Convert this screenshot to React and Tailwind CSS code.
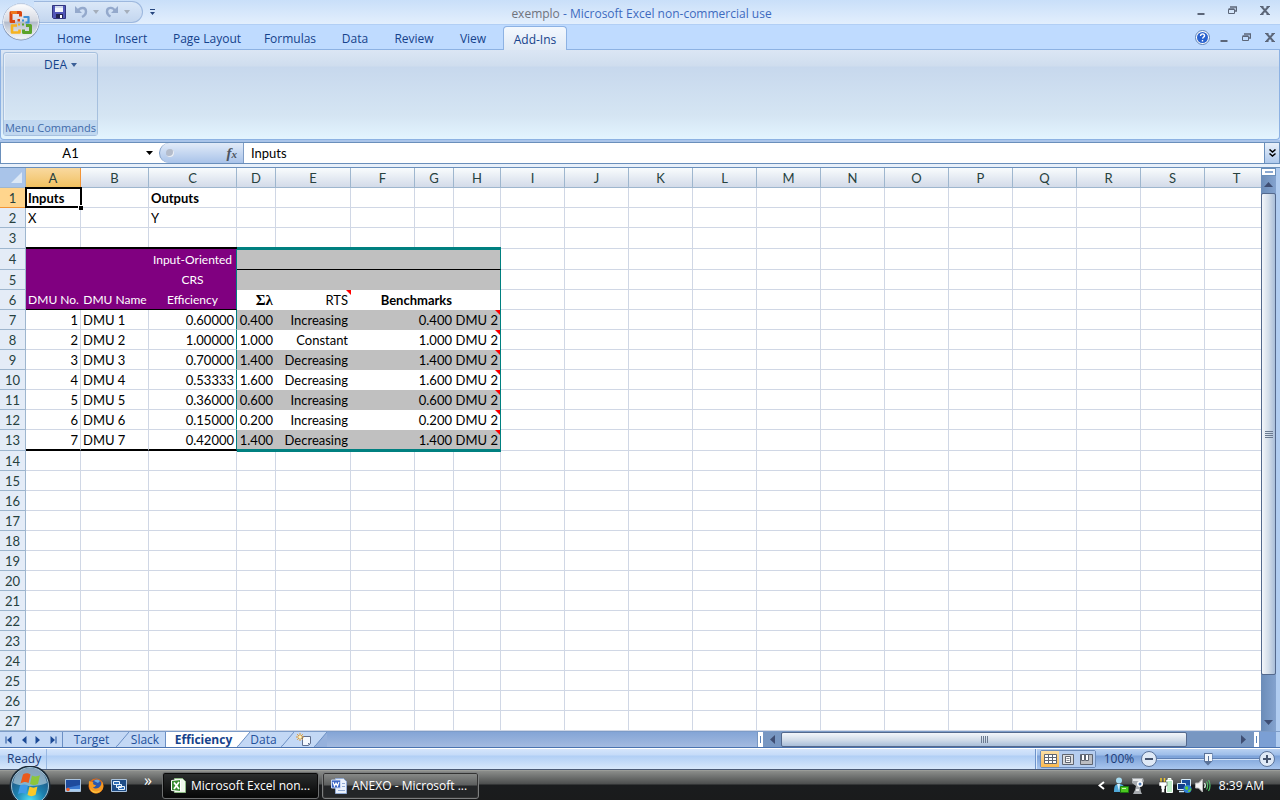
import React, { useState } from "react";

const MENU_TABS = [
  { label: "Home", width: "w-[58px]" },
  { label: "Insert", width: "w-[56px]" },
  { label: "Page Layout", width: "w-[96px]" },
  { label: "Formulas", width: "w-[70px]" },
  { label: "Data", width: "w-[60px]" },
  { label: "Review", width: "w-[58px]" },
  { label: "View", width: "w-[60px]" },
  { label: "Add-Ins", width: "w-[64px]" },
];

const COLUMNS = "ABCDEFGHIJKLMNOPQRST".split("");
const COLUMN_WIDTHS = [
  "w-[55px]", "w-[68px]", "w-[88px]", "w-[39px]", "w-[75px]",
  "w-[64px]", "w-[39px]", "w-[47px]",
];

// Efficiency results, one entry per DMU (sheet rows 7 to 13)
const RESULTS = [
  { dmu: 1, efficiency: "0.60000", lambda: "0.400", rts: "Increasing" },
  { dmu: 2, efficiency: "1.00000", lambda: "1.000", rts: "Constant" },
  { dmu: 3, efficiency: "0.70000", lambda: "1.400", rts: "Decreasing" },
  { dmu: 4, efficiency: "0.53333", lambda: "1.600", rts: "Decreasing" },
  { dmu: 5, efficiency: "0.36000", lambda: "0.600", rts: "Increasing" },
  { dmu: 6, efficiency: "0.15000", lambda: "0.200", rts: "Increasing" },
  { dmu: 7, efficiency: "0.42000", lambda: "1.400", rts: "Decreasing" },
];

/* ---------- window icons ---------- */

const OfficeLogo = () => (
  <svg width="40" height="40" viewBox="0 0 40 40">
    <defs>
      <linearGradient id="orb" x1="0" y1="0" x2="0" y2="1">
        <stop offset="0" stopColor="#fdfdfe" />
        <stop offset="0.48" stopColor="#d5d9e2" />
        <stop offset="0.52" stopColor="#b4bccb" />
        <stop offset="1" stopColor="#f6f8fb" />
      </linearGradient>
    </defs>
    <circle cx="20" cy="20" r="18.5" fill="#8394b2" />
    <circle cx="20" cy="19.6" r="17.5" fill="url(#orb)" stroke="#eef2f8" />
    <g fill="none" strokeWidth="3" strokeLinejoin="round">
      <path d="M14 19.5h-4v-9h9.500v4" stroke="#d8460f" />
      <path d="M10 10.500h6" stroke="#ef7a1c" />
      <path d="M22.500 15h5v5.500h-3" stroke="#3c8fd6" strokeWidth="2.200" />
      <path d="M16 23.500h-5v7h7.500v-3" stroke="#f6b320" strokeWidth="2.600" />
      <path d="M25 23.500h4.500v7h-7v-3" stroke="#5ba32b" />
    </g>
    <path d="M16.500 17h2.500v2.500h-2.500z" fill="#d8460f" />
    <path d="M21 17.500h2v2h-2z" fill="#3c8fd6" />
    <path d="M17 21.500h2v2h-2z" fill="#f6b320" />
    <path d="M21 21.500h2v2h-2z" fill="#5ba32b" />
  </svg>
);

const SaveIcon = () => (
  <svg width="14" height="14" viewBox="0 0 14 14">
    <path d="M0.500 0.500h13v13h-12l-1-1z" fill="#5156b8" stroke="#32357f" />
    <path d="M3 1h8v6H3z" fill="#f2f5fb" />
    <path d="M3 1h8v2H3z" fill="#cfd8ee" />
    <path d="M4 9h7v4H4z" fill="#22244f" />
    <path d="M8 10h2v3H8z" fill="#fff" />
  </svg>
);

const UndoIcon = () => (
  <svg width="14" height="14" viewBox="0 0 14 14" fill="none" stroke="#94a9cc">
    <path d="M4 6c2-4 8-4 8 .5 0 3-2 4.500-4 5.500" strokeWidth="2.400" />
    <path d="M1 1v7h7z" fill="#94a9cc" stroke="none" />
  </svg>
);

const RedoIcon = () => (
  <svg width="14" height="14" viewBox="0 0 14 14" fill="none" stroke="#94a9cc">
    <path d="M10 6C8 1.500 2 2 2 6.500c0 2.500 1.500 4 3.500 5" strokeWidth="2.400" />
    <path d="M13 1v7H6z" fill="#94a9cc" stroke="none" />
  </svg>
);

const Caret = ({ color = "#3b5f97" }) => (
  <svg width="6" height="4" viewBox="0 0 6 4">
    <path d="M0 0h6L3 4z" fill={color} />
  </svg>
);

const MinimizeIcon = () => (
  <svg width="8" height="10" viewBox="0 0 8 10">
    <path d="M0.500 8h7v2h-7z" fill="#5c6678" />
  </svg>
);

const RestoreIcon = () => (
  <svg width="9" height="8" viewBox="0 0 9 8" fill="none" stroke="#5c6678">
    <path d="M2 1h7M8.500 1v4H7" strokeWidth="1.500" />
    <path d="M0.500 3.500h6v4h-6z" />
    <path d="M0.500 3h6" strokeWidth="1.500" />
  </svg>
);

const CloseIcon = () => (
  <svg width="10" height="9" viewBox="0 0 10 9" fill="none" stroke="#5c6678">
    <path d="M1.500 0.500l7 8M8.500 0.500l-7 8" strokeWidth="2" />
    <path d="M0 0.500h3.500M6.500 0.500H10M0 8.500h3.500M6.500 8.500H10" />
  </svg>
);

const HelpIcon = () => (
  <svg width="15" height="15" viewBox="0 0 15 15">
    <circle cx="7.500" cy="7.500" r="7" fill="#fff" stroke="#5b81b8" />
    <circle cx="7.500" cy="7.500" r="5.500" fill="#2a63cf" />
    <path d="M5.500 6c0-3 4.500-2.600 4 0-.2 1-1.700 1.200-1.900 2.600M7.500 10v1.500" stroke="#fff" strokeWidth="1.400" fill="none" />
  </svg>
);

/* ---------- scrollbar and sheet tab pieces ---------- */

const ArrowIcon = ({ dir, color = "#3f4e73" }) => {
  const shapes = {
    up: "M4.500 2L9 7H0z",
    down: "M0 2h9L4.500 7z",
    left: "M7 0v9L2 4.500z",
    right: "M2 0v9l5-4.500z",
  };
  return (
    <svg width="9" height="9" viewBox="0 0 9 9">
      <path d={shapes[dir]} fill={color} />
    </svg>
  );
};

const NavIcon = ({ dir, bar }) => (
  <svg width="8" height="8" viewBox="0 0 8 8" fill="#1c4a96">
    {dir === "left" ? <path d="M6.500 0v8L2 4z" /> : <path d="M1.500 0v8L6 4z" />}
    {bar && (dir === "left" ? <path d="M0.500 0.500h1v7h-1z" /> : <path d="M6.500 0.500h1v7h-1z" />)}
  </svg>
);

// The slanted edge between two sheet tabs
const TabEdge = ({ left = "#c3d8f5", right = "#c3d8f5" }) => (
  <svg width="13" height="15" viewBox="0 0 13 15" className="shrink-0">
    <path d="M0 0h13v15H0z" fill={right} />
    <path d="M0 0h13L2 13q-1 2-2 2z" fill={left} />
    <path d="M13 0L2 13q-1 1.500-2 1.500" fill="none" stroke="#6b8fc4" />
  </svg>
);

const NewSheetIcon = () => (
  <svg width="16" height="14" viewBox="0 0 16 14">
    <path d="M6.500 3.500h8v7l-2 2h-6z" fill="#f4f8fd" stroke="#5f6f8f" />
    <path d="M14 10h-2v2z" fill="#5f6f8f" />
    <path d="M4 0v8M0 4h8M1.200 1.200l5.600 5.600M6.800 1.200L1.200 6.800" stroke="#e29a2e" />
    <circle cx="4" cy="4" r="1.500" fill="#fff3b8" />
  </svg>
);

/* ---------- taskbar icons ---------- */

const StartOrb = () => (
  <svg width="42" height="34" viewBox="0 0 42 34">
    <defs>
      <radialGradient id="start" cx="0.500" cy="0.900" r="0.800">
        <stop offset="0" stopColor="#4fe0f5" />
        <stop offset="0.500" stopColor="#1c7fae" />
        <stop offset="1" stopColor="#24517c" />
      </radialGradient>
    </defs>
    <circle cx="21" cy="20" r="20.500" fill="#1b2a38" />
    <circle cx="21" cy="20" r="18.500" fill="url(#start)" stroke="#9fc4d8" />
    <path d="M4 17C6 5 14 2 21 2s15 3 17 15c-8 4-26 4-34 0z" fill="#d9e8ee" opacity="0.550" />
    <path d="M14 8.500c3-2 5.500-1 7.500 0L19.500 17c-3-1.500-5-1-8 .5z" fill="#ea5a1d" />
    <path d="M23 9.500c3 1.500 5 1.200 8-.5l-2 9c-3 1.500-5 1.500-8 0z" fill="#8cc63c" />
    <path d="M11 19.500c3-1.500 5-1.500 8 0L17 28c-3-1.500-5-1.500-8 0z" fill="#3f9be8" />
    <path d="M20.500 20.500c3 1.500 5 1.500 8 0l-2 8.500c-3 1.500-5 1.500-8 0z" fill="#fbc928" />
  </svg>
);

const DesktopIcon = () => (
  <svg width="16" height="14" viewBox="0 0 16 14">
    <path d="M0.500 0.500h15v12h-15z" fill="#3a78cf" stroke="#a9c2dd" />
    <path d="M1 1h14v5L1 9z" fill="#1e4a9c" />
    <path d="M1 10h14v2H1z" fill="#a8cdf2" />
    <circle cx="3" cy="10.500" r="1.800" fill="#e85b2a" />
  </svg>
);

const FirefoxIcon = () => (
  <svg width="16" height="16" viewBox="0 0 16 16">
    <circle cx="8" cy="8" r="7.500" fill="#e66a14" />
    <circle cx="8.500" cy="6.500" r="5" fill="#2c58ad" />
    <path d="M6 3c2-2 5-1 6 0l-2 2z" fill="#69a8e0" />
    <path d="M1 3c1.500 1 3 .5 4.500 1.500C4 6 6.500 7 8 7c-1 2.500-2.500 2-3 2 1.500 2.500 6 2 8-2 1-2 1-3 .5-4C16 6 16.500 12 11 14.800 5 17 0 12 1 3z" fill="#f59a23" />
    <path d="M2 10c2 4 7 5 11 2-3 4-9 4-11-2z" fill="#fbd24a" />
  </svg>
);

const SwitchWindowsIcon = () => (
  <svg width="16" height="14" viewBox="0 0 16 14">
    <path d="M0.500 0.500h15v12h-15z" fill="#1d4c86" stroke="#a9c2dd" />
    <path d="M2.500 2.500h6v3h-6zM5.500 5.500h5v3h-5zM7.500 7.500h6v3h-6z" fill="#2f6fb8" stroke="#e9f3fb" />
  </svg>
);

const ExcelIcon = () => (
  <svg width="15" height="15" viewBox="0 0 15 15">
    <path d="M3.500 0.500h8l3 3v11h-11z" fill="#eef7ea" stroke="#8dbb84" />
    <path d="M0.500 2.500l9-1v12l-9-1z" fill="#3a8c33" stroke="#fff" />
    <path d="M3 4.500l5 6.500M8 4L3 11" stroke="#fff" strokeWidth="1.800" />
  </svg>
);

const WordIcon = () => (
  <svg width="16" height="16" viewBox="0 0 16 16">
    <path d="M4.500 0.500h8l3 3v12h-11z" fill="#eaf1fb" stroke="#8fa8d3" />
    <path d="M7 12.500h7M11 5.500h3M11 8.500h3" stroke="#8fa8d3" />
    <path d="M0.500 2h9v8h-9z" fill="#3c66c4" stroke="#c9d8f2" />
    <path d="M2 4l1.500 4L5 5l1.500 3L8 4" stroke="#fff" strokeWidth="1.200" fill="none" />
  </svg>
);

const MessengerIcon = () => (
  <svg width="16" height="17" viewBox="0 0 16 17">
    <circle cx="6" cy="3.500" r="3" fill="#a8dcf2" />
    <path d="M1 15c0-6 1-8 5-8s6 2 6 8z" fill="#4fa8d8" />
    <path d="M4 7h3l-1 7z" fill="#d8f1fb" />
    <path d="M7.500 9.500h8v6h-8z" fill="#4cc821" stroke="#1d7a10" />
    <path d="M9 11h4v1H9z" fill="#c9f7a8" />
  </svg>
);

const DeviceIcon = () => (
  <svg width="13" height="16" viewBox="0 0 13 16">
    <path d="M1 0h11l1 3-4 6 1 5 1 2H2l2-4 1-4-4-3z" fill="#a8acb0" />
    <path d="M2 1h9v2H2z" fill="#e7e9ea" />
    <circle cx="9" cy="6" r="3" fill="#fff" />
    <circle cx="9" cy="6" r="1.500" fill="#4a75ad" />
    <path d="M5 11h3v2H5z" fill="#e7e9ea" />
  </svg>
);

const PowerIcon = () => (
  <svg width="15" height="16" viewBox="0 0 15 16">
    <path d="M7.500 2.500h6v12h-6zM9 0.500h3v2H9z" fill="#bfeec8" stroke="#fff" />
    <path d="M2 0v4M5.500 0v4" stroke="#f0c62c" strokeWidth="1.500" />
    <path d="M0 4h8v4H6v3h-.5v3.500h-3V11H2V8H0z" fill="#fff" stroke="#222" strokeWidth="0.500" />
  </svg>
);

const NetworkIcon = () => (
  <svg width="15" height="16" viewBox="0 0 15 16">
    <path d="M4.500 1.500h9v7h-9z" fill="#1a4f9c" stroke="#d6ecfa" />
    <path d="M0.500 5.500h8v6h-8z" fill="#123e88" stroke="#d6ecfa" />
    <path d="M2 13.500h5" stroke="#d6ecfa" strokeWidth="1.500" />
    <circle cx="10.500" cy="11" r="4" fill="#2d7fd6" />
    <path d="M8 9c2-2 4 0 3 2s-3 1-3-2zM11 13l3-3c1 2-1 4-3 4z" fill="#5fd038" />
  </svg>
);

const VolumeIcon = () => (
  <svg width="16" height="15" viewBox="0 0 16 15">
    <path d="M0.500 5h3l4-4v13l-4-4h-3z" fill="#f3f3f3" stroke="#b5b5b5" />
    <path d="M9.500 5c1 1.500 1 3.500 0 5" stroke="#e8f7ea" strokeWidth="1.200" fill="none" />
    <path d="M11.500 3.500c1.500 2 1.500 6 0 8M13.500 2c2 3 2 8 0 11" stroke="#55c06a" strokeWidth="1.200" fill="none" />
  </svg>
);

/* ---------- window chrome ---------- */

const WindowButtons = () => (
  <>
    <button aria-label="Minimize"><MinimizeIcon /></button>
    <button aria-label="Restore"><RestoreIcon /></button>
    <button aria-label="Close"><CloseIcon /></button>
  </>
);

const TitleBar = () => (
  <header className="relative flex h-[25px] items-center border-b border-[#b2cff5] bg-linear-to-b from-[#c9dff9] to-[#e3effd]">
    <button aria-label="Office Button" className="absolute left-px top-[2px] z-10">
      <OfficeLogo />
    </button>
    <div className="ml-[34px] flex h-[22px] w-[109px] items-center rounded-r-full border border-l-0 border-[#9db8de] bg-linear-to-b from-[#dbe8f8] to-[#c3d6ef] pl-[18px]">
      <button aria-label="Save"><SaveIcon /></button>
      <button aria-label="Undo" className="ml-2 flex items-center gap-[5px]">
        <UndoIcon /><Caret color="#a5aebb" />
      </button>
      <button aria-label="Redo" className="ml-[6px] flex items-center gap-[5px]">
        <RedoIcon /><Caret color="#a5aebb" />
      </button>
    </div>
    <button aria-label="Customize Quick Access Toolbar" className="ml-[7px]">
      <svg width="5" height="6" viewBox="0 0 5 6" fill="#26467f">
        <path d="M0 0h5v1H0zM0 3h5L2.500 6z" />
      </svg>
    </button>
    <h1 className="flex-1 pl-1 pt-1 text-center text-xs leading-4 text-[#3e6bbf]">
      <span className="text-[#6f737c]">exemplo</span> - Microsoft Excel non-commercial use
    </h1>
    <div className="flex w-[156px] items-center justify-end gap-[23px] pb-1 pr-[10px]">
      <WindowButtons />
    </div>
  </header>
);

const RibbonTabs = () => {
  const [active, setActive] = useState("Add-Ins");
  return (
    <nav className="flex h-[25px] items-end border-b border-[#8db2e3] bg-[#bfdbff] pl-[45px]">
      {MENU_TABS.map((tab) => (
        <button
          key={tab.label}
          onClick={() => setActive(tab.label)}
          className={`${tab.width} ${
            tab.label === active
              ? "-mb-px h-[24px] rounded-t border border-b-0 border-[#8db2e3] bg-linear-to-b from-[#f3f8fe] to-[#dfe9f5]"
              : "h-[23px]"
          } whitespace-nowrap pt-[2px] text-xs leading-4 text-[#15428b]`}
        >
          {tab.label}
        </button>
      ))}
      <div className="ml-auto flex h-full items-center gap-[14px] pr-[5px]">
        <button aria-label="Help" className="-mr-1"><HelpIcon /></button>
        <WindowButtons />
      </div>
    </nav>
  );
};

const Ribbon = () => (
  <section className="flex h-[90px] px-[2px] pb-[3px] pt-[2px] bg-[linear-gradient(#dbe6f4_0px,#cfddee_16px,#c7d8ed_17px,#d5e5f3_66px,#e3f4fe_88px)] border-x border-b border-[#8db2e3] rounded-b">
    <div className="flex w-[95px] flex-col justify-between rounded-[3px] border border-[#a6c0de] shadow-[inset_1px_1px_0_#e6eef8]">
      <button className="mt-1 flex items-center gap-1 self-start pl-[40px] text-xs leading-4 text-[#15428b]">
        DEA <Caret />
      </button>
      <div className="whitespace-nowrap bg-[#c1d8f0] text-center text-[11px] leading-[15px] text-[#3e6aaa]">
        Menu Commands
      </div>
    </div>
  </section>
);

const FormulaBar = () => (
  <div className="flex h-[22px] border-y border-[#6a8fbb] bg-white font-[Lato,'Open_Sans',sans-serif] text-black">
    <input
      aria-label="Name Box"
      defaultValue="A1"
      className="w-[140px] border-l border-[#6a8fbb] text-center text-[13px] leading-5 outline-none"
    />
    <button aria-label="Open Name Box list" className="flex w-[19px] items-center justify-center">
      <svg width="7" height="4" viewBox="0 0 7 4"><path d="M0 0h7L3.500 4z" /></svg>
    </button>
    <div className="flex w-[85px] items-center justify-between rounded-l-full border-x border-[#7f9dc6] bg-linear-to-b from-[#e2ebf8] to-[#a9c3e9] pl-[6px] pr-[6px]">
      <span className="size-2 rounded-full bg-[#b4bccb] shadow-[inset_-1px_-1px_0_#e9eef6]" />
      <button aria-label="Insert Function" className="font-['Liberation_Serif',serif] text-[15px] font-bold italic leading-4 text-[#4d545f]">
        f<span className="text-[11px]">x</span>
      </button>
    </div>
    <input
      aria-label="Formula"
      defaultValue="Inputs"
      className="min-w-0 flex-1 pl-[7px] text-[13px] leading-5 outline-none"
    />
    <button aria-label="Expand Formula Bar" className="flex w-4 items-center justify-center border-x border-[#6a8fbb] bg-linear-to-b from-[#e8f0fa] to-[#afc9ec]">
      <svg width="7" height="8" viewBox="0 0 7 8" fill="none" stroke="#000" strokeWidth="1.500">
        <path d="M0.500 0.500l3 2.500 3-2.500M0.500 4.500l3 2.500 3-2.500" />
      </svg>
    </button>
  </div>
);

/* ---------- worksheet ---------- */

const GRID = "border-r border-b border-[#d0d7e5]";

// Red corner of a cell that has a note
const NoteMark = () => (
  <span className="absolute right-0 top-0 size-[5px] bg-[#f00] [clip-path:polygon(0_0,100%_0,100%_100%)]" />
);

const EmptyCells = ({ count }) =>
  Array.from({ length: count }, (_, i) => <td key={i} className={GRID}></td>);

const RowHeader = ({ n }) => (
  <th
    scope="row"
    className={`border-b border-r text-center font-normal text-[#27413e] ${
      n === 1 ? "border-[#f29436] bg-[#ffd58d]" : "border-[#9eb6ce] bg-[#e4ecf7]"
    }`}
  >
    {n}
  </th>
);

const ResultRow = ({ row, n }) => {
  const last = n === 13;
  const fill = row.dmu % 2 ? "bg-[#c0c0c0]" : "bg-white";
  const left = last ? "border-r border-r-[#d0d7e5] border-b-2 border-b-black" : GRID;
  const inner = last ? "border-b-2 border-b-[#008080]" : "";
  return (
    <tr className={last ? "h-[21px]" : "h-5"}>
      <RowHeader n={n} />
      <td className={`${left} pr-[2px] text-right`}>{row.dmu}</td>
      <td className={`${left} pl-[2px]`}>DMU {row.dmu}</td>
      <td className={`${last ? "border-b-2 border-b-black" : "border-b border-b-[#d0d7e5]"} border-r border-r-[#008080] pr-[2px] text-right`}>
        {row.efficiency}
      </td>
      <td className={`${fill} ${inner} pr-[3px] text-right`}>{row.lambda}</td>
      <td className={`${fill} ${inner} pr-[3px] text-right`}>{row.rts}</td>
      <td className={`${fill} ${inner}`}></td>
      <td className={`${fill} ${inner} pr-[2px] text-right`}>{row.lambda}</td>
      <td className={`${fill} ${inner} relative border-r border-r-[#008080] pr-[2px] text-right`}>
        DMU 2<NoteMark />
      </td>
      <EmptyCells count={12} />
    </tr>
  );
};

const Worksheet = () => (
  <table className="w-full min-w-[1269px] table-fixed border-separate border-spacing-0 whitespace-nowrap bg-white font-[Lato,'Open_Sans',sans-serif] text-[13px] leading-[18px] text-black">
    <colgroup>
      <col className="w-[26px]" />
      {COLUMNS.slice(0, 19).map((c, i) => (
        <col key={c} className={COLUMN_WIDTHS[i] || "w-[64px]"} />
      ))}
      <col />
    </colgroup>
    <thead>
      <tr className="h-5">
        <td className="border-b border-r border-[#9eb6ce] bg-[#a9c4e9]">
          <div className="ml-auto mr-[3px] size-[11px] bg-[#dce8f6] [clip-path:polygon(100%_0,100%_100%,0_100%)]" />
        </td>
        {COLUMNS.map((c) => (
          <th
            key={c}
            scope="col"
            className={`border-b border-r text-center font-normal text-[#27413e] ${
              c === "A"
                ? "border-[#f29436] bg-linear-to-b from-[#f9d99f] to-[#f1c15f]"
                : "border-[#9eb6ce] bg-linear-to-b from-[#f9fcfd] to-[#d3dbe9]"
            }`}
          >
            {c}
          </th>
        ))}
      </tr>
    </thead>
    <tbody>
      <tr className="h-5">
        <RowHeader n={1} />
        <td className={`${GRID} relative pl-[2px] font-bold`}>
          Inputs
          <span className="absolute -left-px -right-[2px] -top-px -bottom-px border-2 border-black" />
          <span className="absolute -bottom-[3px] -right-[3px] size-[5px] border-l border-t border-white bg-black" />
        </td>
        <td className={GRID}></td>
        <td className={`${GRID} pl-[2px] font-bold`}>Outputs</td>
        <EmptyCells count={17} />
      </tr>
      <tr className="h-5">
        <RowHeader n={2} />
        <td className={`${GRID} pl-[2px]`}>X</td>
        <td className={GRID}></td>
        <td className={`${GRID} pl-[2px]`}>Y</td>
        <EmptyCells count={17} />
      </tr>
      <tr className="h-[21px]">
        <RowHeader n={3} />
        {["A", "B", "C"].map((c) => (
          <td key={c} className="border-b-2 border-b-black bg-[linear-gradient(#d0d7e5,#d0d7e5)] bg-[length:1px_100%] bg-right bg-no-repeat"></td>
        ))}
        {["D", "E", "F", "G", "H"].map((c) => (
          <td key={c} className="border-b-2 border-b-[#008080] bg-[linear-gradient(#d0d7e5,#d0d7e5)] bg-[length:1px_100%] bg-right bg-no-repeat"></td>
        ))}
        <EmptyCells count={12} />
      </tr>
      <tr className="h-[21px]">
        <RowHeader n={4} />
        <td className="bg-[#800080]"></td>
        <td className="bg-[#800080]"></td>
        <td className="border-r border-[#008080] bg-[#800080] text-center text-xs text-white">Input-Oriented</td>
        <td colSpan={5} className="border-b border-r border-t border-b-black border-r-[#008080] border-t-[#008080] bg-[#c0c0c0]"></td>
        <EmptyCells count={12} />
      </tr>
      <tr className="h-5">
        <RowHeader n={5} />
        <td className="bg-[#800080]"></td>
        <td className="bg-[#800080]"></td>
        <td className="border-r border-[#008080] bg-[#800080] text-center text-xs text-white">CRS</td>
        <td colSpan={5} className="border-r border-[#008080] bg-[#c0c0c0]"></td>
        <EmptyCells count={12} />
      </tr>
      <tr className="h-5">
        <RowHeader n={6} />
        <td className="border-b border-black bg-[#800080] text-center text-xs text-white">DMU No.</td>
        <td className="border-b border-black bg-[#800080] text-center text-xs text-white">DMU Name</td>
        <td className="border-b border-r border-b-black border-r-[#008080] bg-[#800080] text-center text-xs text-white">Efficiency</td>
        <td className="pr-[3px] text-right font-['Liberation_Serif',serif] text-[15px] font-bold">Σλ</td>
        <td className="relative pr-[3px] text-right">RTS<NoteMark /></td>
        <td colSpan={2} className="pr-[2px] text-right font-bold">Benchmarks</td>
        <td className="border-r border-[#008080]"></td>
        <EmptyCells count={12} />
      </tr>
      {RESULTS.map((row) => (
        <ResultRow key={row.dmu} row={row} n={row.dmu + 6} />
      ))}
      {Array.from({ length: 14 }, (_, i) => i + 14).map((n) => (
        <tr key={n} className="h-5">
          <RowHeader n={n} />
          <EmptyCells count={3} />
          {n === 14 ? (
            ["D", "E", "F", "G", "H"].map((c) => (
              <td key={c} className="border-b border-t border-b-[#d0d7e5] border-t-[#008080] bg-[linear-gradient(#d0d7e5,#d0d7e5)] bg-[length:1px_100%] bg-right bg-no-repeat"></td>
            ))
          ) : (
            <EmptyCells count={5} />
          )}
          <EmptyCells count={12} />
        </tr>
      ))}
    </tbody>
  </table>
);

const VerticalScrollbar = () => (
  <div className="flex w-[15px] shrink-0 flex-col bg-linear-to-r from-[#6b8cb8] to-[#84a3cf]">
    <div className="flex h-2 items-center justify-center border border-[#6a8fbb] bg-white">
      <span className="h-[2px] w-2 bg-[#8aa8d0]" />
    </div>
    <button aria-label="Scroll up" className="flex h-[17px] items-center justify-center"><ArrowIcon dir="up" /></button>
    <div className="flex flex-[483] flex-col items-center justify-center gap-px rounded-[2px] border border-[#54698d] bg-linear-to-r from-[#f3f6fa] via-[#d4deea] to-[#a9bed9]">
      {[1, 2, 3, 4].map((i) => (
        <span key={i} className="h-px w-2 bg-[#6b7a90]" />
      ))}
    </div>
    <div className="flex-[39]" />
    <button aria-label="Scroll down" className="flex h-[17px] items-center justify-center"><ArrowIcon dir="down" /></button>
  </div>
);

const SplitHandle = () => (
  <span className="flex w-[7px] items-center justify-center border-x border-[#7897c2] bg-white">
    <span className="h-[7px] w-px bg-[#5c83b8]" />
  </span>
);

const SheetTabs = () => (
  <div className="flex h-[17px] border-b border-t border-b-[#4a73b0] border-t-[#7d9cc8] bg-linear-to-b from-[#84a5d6] to-[#a3bae0] text-xs leading-[15px] text-[#23519b]">
    <div className="flex w-[63px] items-center justify-between border-r border-[#6b8fc4] bg-[#c3d8f5] pl-[5px] pr-[5px]">
      <button aria-label="First sheet"><NavIcon dir="left" bar /></button>
      <button aria-label="Previous sheet"><NavIcon dir="left" /></button>
      <button aria-label="Next sheet"><NavIcon dir="right" /></button>
      <button aria-label="Last sheet"><NavIcon dir="right" bar /></button>
    </div>
    <button className="w-[53px] bg-[#c3d8f5] pl-1">Target</button>
    <TabEdge />
    <button className="w-[37px] border-r border-[#6b8fc4] bg-[#c3d8f5] pr-1">Slack</button>
    <button className="w-[71px] bg-white font-bold text-[#15428b] pl-1">Efficiency</button>
    <TabEdge left="#ffffff" />
    <button className="w-[31px] bg-[#c3d8f5] pr-1">Data</button>
    <TabEdge />
    <button aria-label="Insert Worksheet" className="flex w-[20px] items-center justify-center bg-[#c3d8f5]"><NewSheetIcon /></button>
    <TabEdge right="#96b1dc" />
    <div className="min-w-4 flex-1" />
    <div className="flex w-[503px] shrink-0 bg-[#7897c2]">
      <SplitHandle />
      <button aria-label="Scroll left" className="flex w-[17px] items-center justify-center"><ArrowIcon dir="left" /></button>
      <div className="flex w-[406px] items-center justify-center gap-px rounded-[2px] border border-[#54698d] bg-linear-to-b from-[#f3f6fa] via-[#d4deea] to-[#a9bed9]">
        {[1, 2, 3, 4].map((i) => (
          <span key={i} className="h-[7px] w-px bg-[#6b7a90]" />
        ))}
      </div>
      <div className="flex-1" />
      <button aria-label="Scroll right" className="mr-[5px] flex w-[9px] items-center justify-center"><ArrowIcon dir="right" /></button>
      <SplitHandle />
    </div>
    <div className="w-[20px] shrink-0 border-r-4 border-[#b0ccf0] bg-[#7b9fd4]" />
  </div>
);

const StatusBar = () => {
  const [zoom, setZoom] = useState(100);
  return (
    <footer className="flex h-[22px] items-stretch border-b border-t border-b-[#4b5a75] border-t-white bg-[linear-gradient(#d5e5fb_0px,#c5dbf8_6px,#b1cff5_7px,#d8e8fb_20px)] text-xs text-[#1c3c78]">
      <span className="w-[47px] border-r border-[#98b8e2] pl-[7px] leading-5">Ready</span>
      <div className="flex-1" />
      <div className="flex w-[245px] items-center border-l border-[#6d93ca] bg-[linear-gradient(#b9d1f2_0px,#9dbde9_6px,#7ba1d8_7px,#a9c6ee_20px)] pl-1 shadow-[inset_1px_0_0_#dceafb]">
        <div className="flex h-[18px] rounded-[2px] border border-[#6d8cba]">
          <button aria-label="Normal view" className="flex w-[18px] items-center justify-center bg-linear-to-b from-[#fbdfa5] to-[#fbb94d]">
            <svg width="13" height="10" viewBox="0 0 13 10" fill="#fff" stroke="#5f6570">
              <path d="M0.500 0.500h12v9h-12zM0.500 3.500h12M0.500 6.500h12M4.500 0.500v9M8.500 0.500v9" />
            </svg>
          </button>
          <button aria-label="Page layout view" className="flex w-[18px] items-center justify-center bg-[#b5cdef]">
            <svg width="12" height="11" viewBox="0 0 12 11" fill="#d9dbde" stroke="#5f6570">
              <path d="M0.500 0.500h11v10h-11z" />
              <path d="M3.500 2.500h5v6h-5z" fill="#fff" />
              <path d="M4.500 4.500h3M4.500 6.500h3" strokeWidth="0.800" />
            </svg>
          </button>
          <button aria-label="Page break preview" className="flex w-[18px] items-center justify-center bg-[#b5cdef]">
            <svg width="13" height="11" viewBox="0 0 13 11" fill="#bcbec2" stroke="#5f6570">
              <path d="M0.500 0.500h12v10h-12z" />
              <path d="M1.500 0.500h3v6h-3zM5.500 0.500h3v6h-3z" fill="#fff" />
            </svg>
          </button>
        </div>
        <button className="w-[42px] pl-1 text-center">{zoom}%</button>
        <button aria-label="Zoom out" className="ml-[3px]" onClick={() => setZoom(Math.max(0, zoom - 10))}>
          <svg width="16" height="16" viewBox="0 0 16 16">
            <circle cx="8" cy="8" r="7.500" fill="#dfe9f6" stroke="#5a7299" />
            <path d="M4 7h8v2H4z" fill="#46546e" />
          </svg>
        </button>
        <input
          type="range"
          aria-label="Zoom"
          min="0"
          max="200"
          value={zoom}
          onChange={(e) => setZoom(Number(e.target.value))}
          className="h-4 w-[102px] appearance-none bg-[linear-gradient(transparent_7px,#5f81b5_7px,#5f81b5_8px,#d3e3f8_8px,#d3e3f8_9px,transparent_9px)] [&::-webkit-slider-thumb]:h-[13px] [&::-webkit-slider-thumb]:w-[9px] [&::-webkit-slider-thumb]:appearance-none [&::-webkit-slider-thumb]:bg-[linear-gradient(#5a7299,#5a7299),linear-gradient(#f2f6fb,#f2f6fb)] [&::-webkit-slider-thumb]:bg-[length:1px_5px,7px_7px] [&::-webkit-slider-thumb]:bg-[position:center_3px,center_1px] [&::-webkit-slider-thumb]:bg-no-repeat [&::-webkit-slider-thumb]:bg-[color:#5a7299] [&::-webkit-slider-thumb]:[clip-path:polygon(0_0,100%_0,100%_65%,50%_100%,0_65%)]"
        />
        <button aria-label="Zoom in" onClick={() => setZoom(Math.min(200, zoom + 10))}>
          <svg width="16" height="16" viewBox="0 0 16 16">
            <circle cx="8" cy="8" r="7.500" fill="#dfe9f6" stroke="#5a7299" />
            <path d="M4 7h8v2H4zM7 4h2v8H7z" fill="#46546e" />
          </svg>
        </button>
      </div>
    </footer>
  );
};

const Taskbar = () => (
  <div className="relative flex h-[30px] items-center border-t border-[#9a9c98] bg-[linear-gradient(#8b8d8b_0px,#4c4e4e_13px,#1a1c1e_14px,#1a1b1c_28px)] text-xs text-white">
    <button aria-label="Start" className="absolute -top-[5px] left-[9px]"><StartOrb /></button>
    <div className="flex w-[162px] items-center gap-[7px] pl-[65px]">
      <button aria-label="Show desktop"><DesktopIcon /></button>
      <button aria-label="Firefox"><FirefoxIcon /></button>
      <button aria-label="Switch between windows"><SwitchWindowsIcon /></button>
      <button className="ml-[10px] pb-3 text-base leading-4">»</button>
    </div>
    <button className="flex h-[27px] w-[157px] items-center gap-[5px] whitespace-nowrap rounded-[3px] border border-[#6d6f70] bg-linear-to-b from-[#2c2e2f] to-[#060707] pl-2 shadow-[inset_0_0_0_1px_#0a0a0a]">
      <ExcelIcon />Microsoft Excel non...
    </button>
    <button className="ml-[3px] flex h-[27px] w-[157px] items-center gap-[5px] whitespace-nowrap rounded-[3px] border border-[#7d7f80] bg-[linear-gradient(#8b8d8b_0px,#5c5e5e_12px,#232527_13px,#232527_26px)] pl-2 shadow-[inset_0_0_0_1px_#333]">
      <WordIcon />ANEXO - Microsoft ...
    </button>
    <div className="ml-auto flex items-center pr-4">
      <button aria-label="Show hidden icons" className="mr-2">
        <svg width="7" height="9" viewBox="0 0 7 9"><path d="M6 1L1.500 4.500 6 8" fill="none" stroke="#fff" strokeWidth="2" /></svg>
      </button>
      <MessengerIcon />
      <span className="ml-[2px] mr-[15px]"><DeviceIcon /></span>
      <span className="flex gap-[3px]">
        <PowerIcon /><NetworkIcon /><VolumeIcon />
      </span>
      <time className="ml-[8px]">8:39 AM</time>
    </div>
  </div>
);

export default function App() {
  return (
    <div className="flex min-h-screen flex-col bg-[#bfdbff] font-['Open_Sans','Noto_Sans',sans-serif]">
      <TitleBar />
      <RibbonTabs />
      <Ribbon />
      <div className="h-[2px] bg-[#a9c4e9]" />
      <FormulaBar />
      <div className="h-1 border-b border-[#6a8fbb] bg-[#e8f0fa]" />
      <main className="flex flex-1 bg-white">
        <div className="min-w-0 flex-1 overflow-hidden">
          <Worksheet />
        </div>
        <VerticalScrollbar />
        <div className="w-1 shrink-0 bg-[#b0ccf0]" />
      </main>
      <SheetTabs />
      <StatusBar />
      <Taskbar />
    </div>
  );
}
